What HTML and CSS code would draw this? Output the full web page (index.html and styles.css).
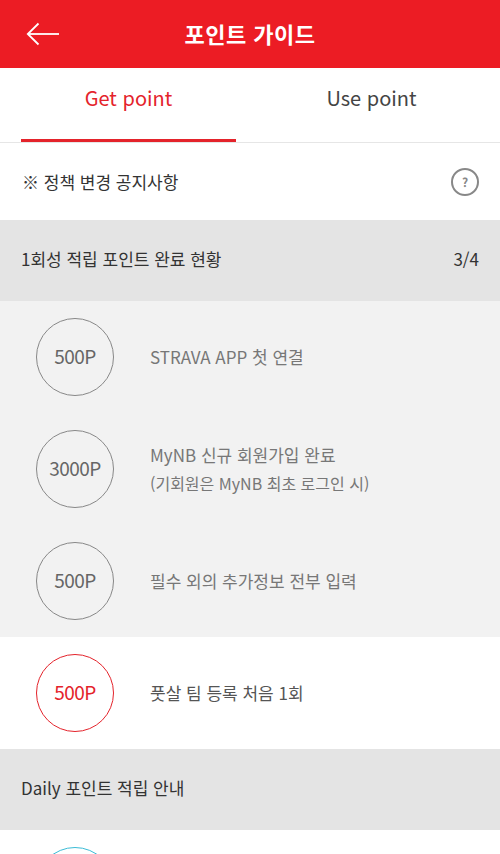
FILE: index.html
```html
<!DOCTYPE html>
<html lang="ko">
<head>
    <meta charset="UTF-8">
    <meta name="viewport" content="width=device-width, initial-scale=1.0">
    <title>포인트 가이드</title>
    <link rel="stylesheet" href="styles.css">
</head>
<body>
    <header class="topbar">
        <a class="back" href="#">
            <svg width="34" height="24" viewBox="0 0 34 24" fill="none" stroke="#fff" stroke-width="1.8">
                <path d="M33 12H2"/>
                <path d="M12.5 1.5L1.8 12L12.5 22.5"/>
            </svg>
        </a>
        <h1>포인트 가이드</h1>
    </header>

    <nav class="tabs">
        <a class="tab active" href="#">Get point</a>
        <a class="tab" href="#">Use point</a>
    </nav>

    <div class="notice">
        <span>※ 정책 변경 공지사항</span>
        <span class="help">?</span>
    </div>

    <div class="section-head">
        <span>1회성 적립 포인트 완료 현황</span>
        <span>3/4</span>
    </div>

    <ul class="items">
        <li class="item done">
            <div class="badge">500P</div>
            <p>STRAVA APP 첫 연결</p>
        </li>
        <li class="item done">
            <div class="badge">3000P</div>
            <p>MyNB 신규 회원가입 완료<br><small>(기회원은 MyNB 최초 로그인 시)</small></p>
        </li>
        <li class="item done">
            <div class="badge">500P</div>
            <p>필수 외의 추가정보 전부 입력</p>
        </li>
        <li class="item">
            <div class="badge red">500P</div>
            <p>풋살 팀 등록 처음 1회</p>
        </li>
    </ul>

    <div class="section-head">
        <span>Daily 포인트 적립 안내</span>
    </div>

    <ul class="items">
        <li class="item">
            <div class="badge cyan"></div>
        </li>
    </ul>
</body>
</html>
```

FILE: styles.css
```css
body {
    margin: 0;
    font-family: "Noto Sans CJK KR", "Noto Sans", sans-serif;
    background-color: #fff;
    color: #333;
}
.topbar {
    height: 68px;
    background-color: #ec1c24;
    display: flex;
    align-items: center;
    justify-content: center;
    position: relative;
}
.back {
    position: absolute;
    left: 26px;
    top: 22px;
    display: block;
    line-height: 0;
}
.topbar h1 {
    margin: 0 0 2px;
    color: #fff;
    font-size: 22px;
    font-weight: 700;
    letter-spacing: 0.5px;
}
.tabs {
    display: flex;
    height: 74px;
    border-bottom: 1px solid #e6e6e6;
    padding: 0 21px;
}
.tab {
    flex: 1;
    display: flex;
    align-items: center;
    justify-content: center;
    text-decoration: none;
    color: #444;
    font-size: 20px;
    border-bottom: 3px solid transparent;
    padding-bottom: 12px;
}
.tab.active {
    color: #e4232b;
    border-bottom-color: #e4232b;
}
.tab + .tab {
    margin-left: 28px;
}
.notice {
    height: 77px;
    display: flex;
    align-items: center;
    justify-content: space-between;
    padding: 0 21px 0 22px;
    font-size: 17px;
    color: #333;
}
.help {
    width: 24px;
    height: 24px;
    border: 2px solid #888;
    border-radius: 50%;
    display: flex;
    align-items: center;
    justify-content: center;
    font-size: 12px;
    font-weight: 700;
    color: #888;
}
.section-head {
    height: 81px;
    background-color: #e4e4e4;
    display: flex;
    align-items: center;
    justify-content: space-between;
    padding: 0 21px 4px 21px;
    box-sizing: border-box;
    font-size: 17px;
    color: #333;
}
.items {
    list-style: none;
    margin: 0;
    padding: 0;
}
.item {
    height: 112px;
    display: flex;
    align-items: center;
    padding-left: 36px;
    background-color: #fff;
}
.item.done {
    background-color: #f2f2f2;
}
.badge {
    width: 78px;
    height: 78px;
    border: 1.5px solid #888;
    border-radius: 50%;
    display: flex;
    align-items: center;
    justify-content: center;
    padding-bottom: 4px;
    box-sizing: border-box;
    font-size: 19px;
    letter-spacing: -0.5px;
    color: #666;
    flex-shrink: 0;
}
.badge.red {
    border-color: #e4232b;
    color: #e4232b;
}
.badge.cyan {
    border-color: #3bbcd6;
}
.item p {
    margin: 0 0 0 36px;
    font-size: 17px;
    line-height: 28px;
    color: #777;
}
.item:not(.done) p {
    color: #555;
}
.item small {
    font-size: 16px;
}
```
